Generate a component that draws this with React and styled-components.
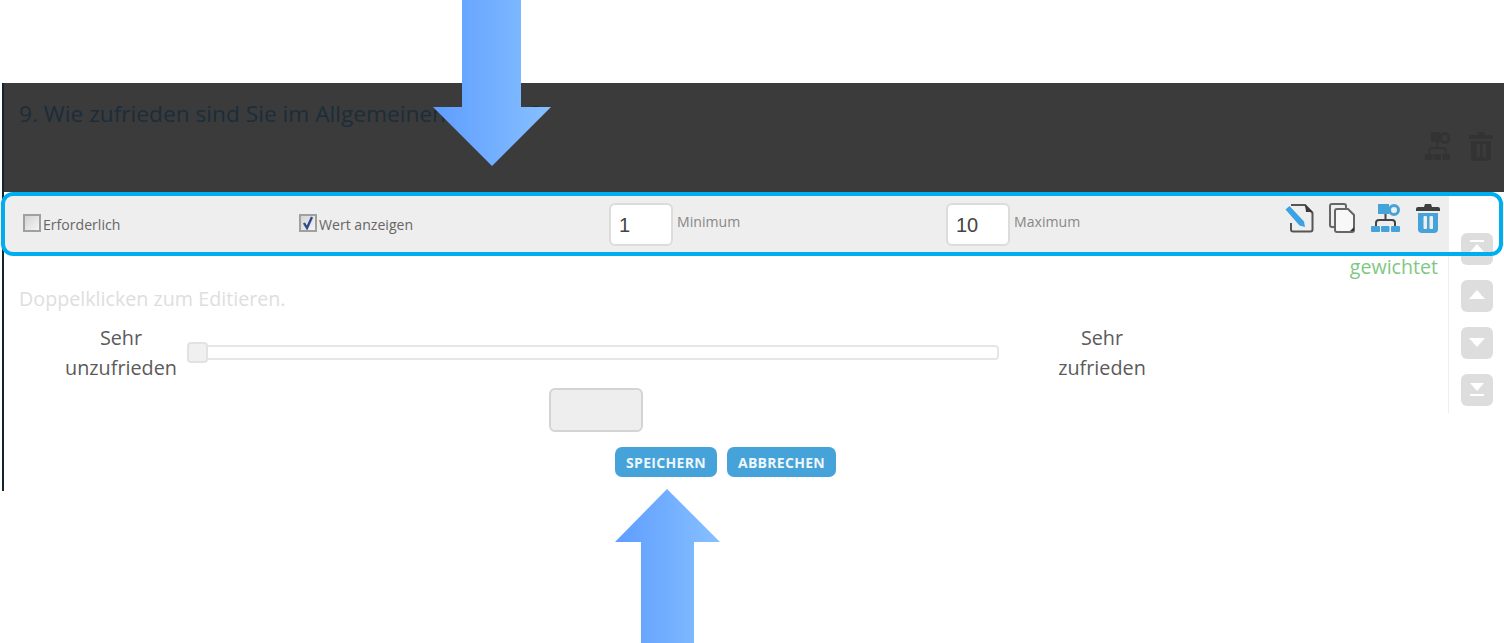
import styled, { createGlobalStyle } from "styled-components"

const GlobalStyle = createGlobalStyle`
    html, body {
        margin: 0;
        padding: 0;
        background: #fff;
        font-family: "Open Sans", "Liberation Sans", sans-serif;
    }
    * { box-sizing: border-box; }
`

const Page = styled.div`
    position: relative;
    width: 1504px;
    height: 643px;
    padding-top: 83px;
    overflow: hidden;
`

const Panel = styled.div`
    margin-left: 2px;
    height: 408px;
    border-left: 2px solid #0f2534;
`

const Header = styled.div`
    height: 109px;
    background: #3b3b3b;
    padding: 15px 11px 31px 15px;
    display: flex;
    justify-content: space-between;
`

const Title = styled.h2`
    margin: 0;
    font-size: 22.7px;
    font-weight: 400;
    line-height: 32px;
    color: #1b2d3a;
`

const HeaderIcons = styled.div`
    align-self: flex-end;
    display: flex;
    gap: 18px;
    align-items: flex-end;
`

const Body = styled.div`
    display: flex;
    padding-top: 3px;
    align-items: flex-start;
`

const Main = styled.div`
    width: 1444px;
`

const Toolbar = styled.div`
    height: 57px;
    background: #eeeeee;
    display: grid;
    grid-template-columns: 276px 311px 337px 1fr auto;
    align-items: center;
    padding: 0 8px 0 19px;
`

const Field = styled.label`
    display: flex;
    align-items: center;
    font-size: 14.1px;
    color: #666;
`

const Check = styled.span`
    width: 18px;
    height: 18px;
    border: 2px solid #a0a0a0;
    background: linear-gradient(135deg, #d4d4d4, #f4f4f4);
    margin: 0 2px 2px 0;
    display: flex;
    align-items: center;
    justify-content: center;
`

const CheckText = styled.span`
    margin-top: 2px;
`

const NumberBox = styled.span`
    width: 64px;
    height: 43px;
    margin: 1px 4px 0 -1px;
    padding-left: 8px;
    background: #fff;
    border: 2px solid #dcdcdc;
    border-radius: 6px;
    font-family: "Liberation Sans", Arial, sans-serif;
    font-size: 20px;
    line-height: 41px;
    color: #444;
`

const SmallLabel = styled.span`
    margin-bottom: 4px;
    font-size: 14.1px;
    color: #888;
`

const Tools = styled.div`
    display: flex;
    align-items: center;
    justify-content: flex-end;
    gap: 15px;
    margin-top: -11px;
`

const Weighted = styled.div`
    height: 32px;
    padding: 1px 10px 0 0;
    text-align: right;
    font-size: 19.6px;
    line-height: 28px;
    color: #7fc783;
`

const Hint = styled.div`
    height: 30px;
    padding-left: 15px;
    font-size: 19.7px;
    line-height: 30px;
    color: #dedede;
`

const Scale = styled.div`
    display: flex;
    margin-top: 9px;
    align-items: flex-start;
`

const ScaleLabel = styled.div`
    width: ${p => p.$width}px;
    margin-left: ${p => p.$offset || 0}px;
    text-align: center;
    font-size: 19.8px;
    line-height: 30px;
    color: #5b5b5b;
`

const Track = styled.div`
    position: relative;
    width: 812px;
    height: 15px;
    margin-top: 22px;
    background: #fff;
    border: 2px solid #e6e6e6;
    border-radius: 4px;
`

const Handle = styled.span`
    position: absolute;
    left: -2px;
    top: -5px;
    width: 21px;
    height: 21px;
    background: #f0f0f0;
    border: 2px solid #e2e2e2;
    border-radius: 4px;
`

const ValueBox = styled.div`
    width: 94px;
    height: 44px;
    margin: 5px 0 0 545px;
    background: #eeeeee;
    border: 2px solid #d4d4d4;
    border-radius: 6px;
`

const Actions = styled.div`
    display: flex;
    gap: 10px;
    margin: 15px 0 0 611px;
`

const ActionButton = styled.button`
    width: ${p => p.$width}px;
    height: 30px;
    padding: 0;
    border: 0;
    border-radius: 7px;
    background: #45a3da;
    color: #eef6fb;
    font-family: inherit;
    font-size: 14px;
    font-weight: 700;
    letter-spacing: 0.3px;
`

const Rail = styled.div`
    flex: 1;
    height: 218px;
    border-left: 1px solid #eeeeee;
    padding: 38px 0 0 12px;
    display: flex;
    flex-direction: column;
    gap: 15px;
`

const RailButton = styled.div`
    width: 32px;
    height: 32px;
    border-radius: 6px;
    background: #dddddd;
    display: flex;
    align-items: center;
    justify-content: center;
`

const Highlight = styled.div`
    position: absolute;
    left: 1px;
    top: 192px;
    width: 1502px;
    height: 64px;
    border: 4px solid #00aeef;
    border-radius: 12px;
    pointer-events: none;
`

const Arrow = styled.svg`
    position: absolute;
    left: ${p => p.$left}px;
    top: ${p => p.$top}px;
`

function EditIcon() {
    return (
        <svg width="29" height="30" viewBox="0 0 29 30">
            <path d="M6 2h14l7.5 8v16.5a2 2 0 0 1-2 2H8a2 2 0 0 1-2-2V20" fill="none" stroke="#555" strokeWidth="2" />
            <path d="M20 1.5l1 7.5h7z" fill="#3a3a3a" />
            <path d="M0.5 6.5L4.500 3l14.500 15.500 1 5.500-5.500-1.500z" fill="#3ba2e4" />
        </svg>
    )
}

function CopyIcon() {
    return (
        <svg width="26" height="30" viewBox="0 0 26 30">
            <path d="M5 24H3a2 2 0 0 1-2-2V3a2 2 0 0 1 2-2h12a2 2 0 0 1 2 2v2" fill="none" stroke="#666" strokeWidth="2" />
            <path d="M8 6h11l6 6v15a2 2 0 0 1-2 2H8a2 2 0 0 1-2-2V8a2 2 0 0 1 2-2z" fill="#f8f8f8" stroke="#666" strokeWidth="2" />
            <path d="M25 24v4h-4z" fill="#333" />
        </svg>
    )
}

function OrgIcon({ dim }) {
    const fill = dim ? "#333" : "#45a3da"
    const line = dim ? "#333" : "#444"
    return (
        <svg width={dim ? 27 : 31} height="30" viewBox="0 0 31 30" preserveAspectRatio="none">
            <rect x="8" y="1" width="11" height="10" fill={fill} />
            <circle cx="24" cy="7" r="4.5" fill="none" stroke={fill} strokeWidth="3" />
            <path d="M15.5 11v6M6 23v-3a3 3 0 0 1 3-3h13a3 3 0 0 1 3 3v3" fill="none" stroke={line} strokeWidth="2" />
            <rect x="1" y="23" width="9" height="6" rx="1" fill={fill} />
            <rect x="11" y="23" width="8.500" height="6" rx="1" fill={fill} />
            <rect x="21" y="23" width="9" height="6" rx="1" fill={fill} />
        </svg>
    )
}

function TrashIcon({ dim }) {
    const fill = dim ? "#333" : "#45a3da"
    const lid = dim ? "#333" : "#3f3f3f"
    const slot = dim ? "#3b3b3b" : "#eee"
    return (
        <svg width="24" height="30" viewBox="0 0 24 30">
            <path d="M9 1h6l1 3h6a2 2 0 0 1 2 2v2H0V6a2 2 0 0 1 2-2h6z" fill={lid} />
            <path d="M2 10h20v16a4 4 0 0 1-4 4H6a4 4 0 0 1-4-4z" fill={fill} />
            <rect x="7.500" y="13" width="3.500" height="13" rx="1" fill={slot} />
            <rect x="13.500" y="13" width="3.500" height="13" rx="1" fill={slot} />
        </svg>
    )
}

const railGlyphs = [
    "M5 3h14v2H5zM12 7l7 8H5z",
    "M12 6l8 9H4z",
    "M4 7h16l-8 9z",
    "M5 5h14l-7 8zM5 16h14v2H5z",
]

export default function App() {
    return (
        <Page>
            <GlobalStyle />
            <Panel>
                <Header>
                    <Title>9. Wie zufrieden sind Sie im Allgemeinen mit uns?</Title>
                    <HeaderIcons>
                        <OrgIcon dim />
                        <TrashIcon dim />
                    </HeaderIcons>
                </Header>
                <Body>
                    <Main>
                        <Toolbar>
                            <Field>
                                <Check />
                                <CheckText>Erforderlich</CheckText>
                            </Field>
                            <Field>
                                <Check>
                                    <svg width="14" height="14" viewBox="0 0 14 14">
                                        <path d="M3 7l3 5 5-11" fill="none" stroke="#2f4a8c" strokeWidth="2.4" />
                                    </svg>
                                </Check>
                                <CheckText>Wert anzeigen</CheckText>
                            </Field>
                            <Field>
                                <NumberBox>1</NumberBox>
                                <SmallLabel>Minimum</SmallLabel>
                            </Field>
                            <Field>
                                <NumberBox>10</NumberBox>
                                <SmallLabel>Maximum</SmallLabel>
                            </Field>
                            <Tools>
                                <EditIcon />
                                <CopyIcon />
                                <OrgIcon />
                                <TrashIcon />
                            </Tools>
                        </Toolbar>
                        <Weighted>gewichtet</Weighted>
                        <Hint>Doppelklicken zum Editieren.</Hint>
                        <Scale>
                            <ScaleLabel $width={132} $offset={51}>Sehr<br />unzufrieden</ScaleLabel>
                            <Track><Handle /></Track>
                            <ScaleLabel $width={206}>Sehr<br />zufrieden</ScaleLabel>
                        </Scale>
                        <ValueBox />
                        <Actions>
                            <ActionButton $width={102}>SPEICHERN</ActionButton>
                            <ActionButton $width={109}>ABBRECHEN</ActionButton>
                        </Actions>
                    </Main>
                    <Rail>
                        {railGlyphs.map(d => (
                            <RailButton key={d}>
                                <svg width="24" height="24" viewBox="0 0 24 24">
                                    <path d={d} fill="#fff" />
                                </svg>
                            </RailButton>
                        ))}
                    </Rail>
                </Body>
            </Panel>
            <Highlight />
            <Arrow $left={433} $top={0} width="118" height="166" viewBox="0 0 118 166">
                <defs>
                    <linearGradient id="arrowDown" x1="0" x2="1" y1="0" y2="0">
                        <stop offset="0" stopColor="#5e9dff" />
                        <stop offset="1" stopColor="#87c0ff" />
                    </linearGradient>
                </defs>
                <path d="M29 0h59v107h30L59 166 0 107h29z" fill="url(#arrowDown)" />
            </Arrow>
            <Arrow $left={615} $top={489} width="105" height="154" viewBox="0 0 105 154">
                <defs>
                    <linearGradient id="arrowUp" x1="0" x2="1" y1="0" y2="0">
                        <stop offset="0" stopColor="#5e9dff" />
                        <stop offset="1" stopColor="#87c0ff" />
                    </linearGradient>
                </defs>
                <path d="M52 0l53 53H79v101H26V53H0z" fill="url(#arrowUp)" />
            </Arrow>
        </Page>
    )
}
